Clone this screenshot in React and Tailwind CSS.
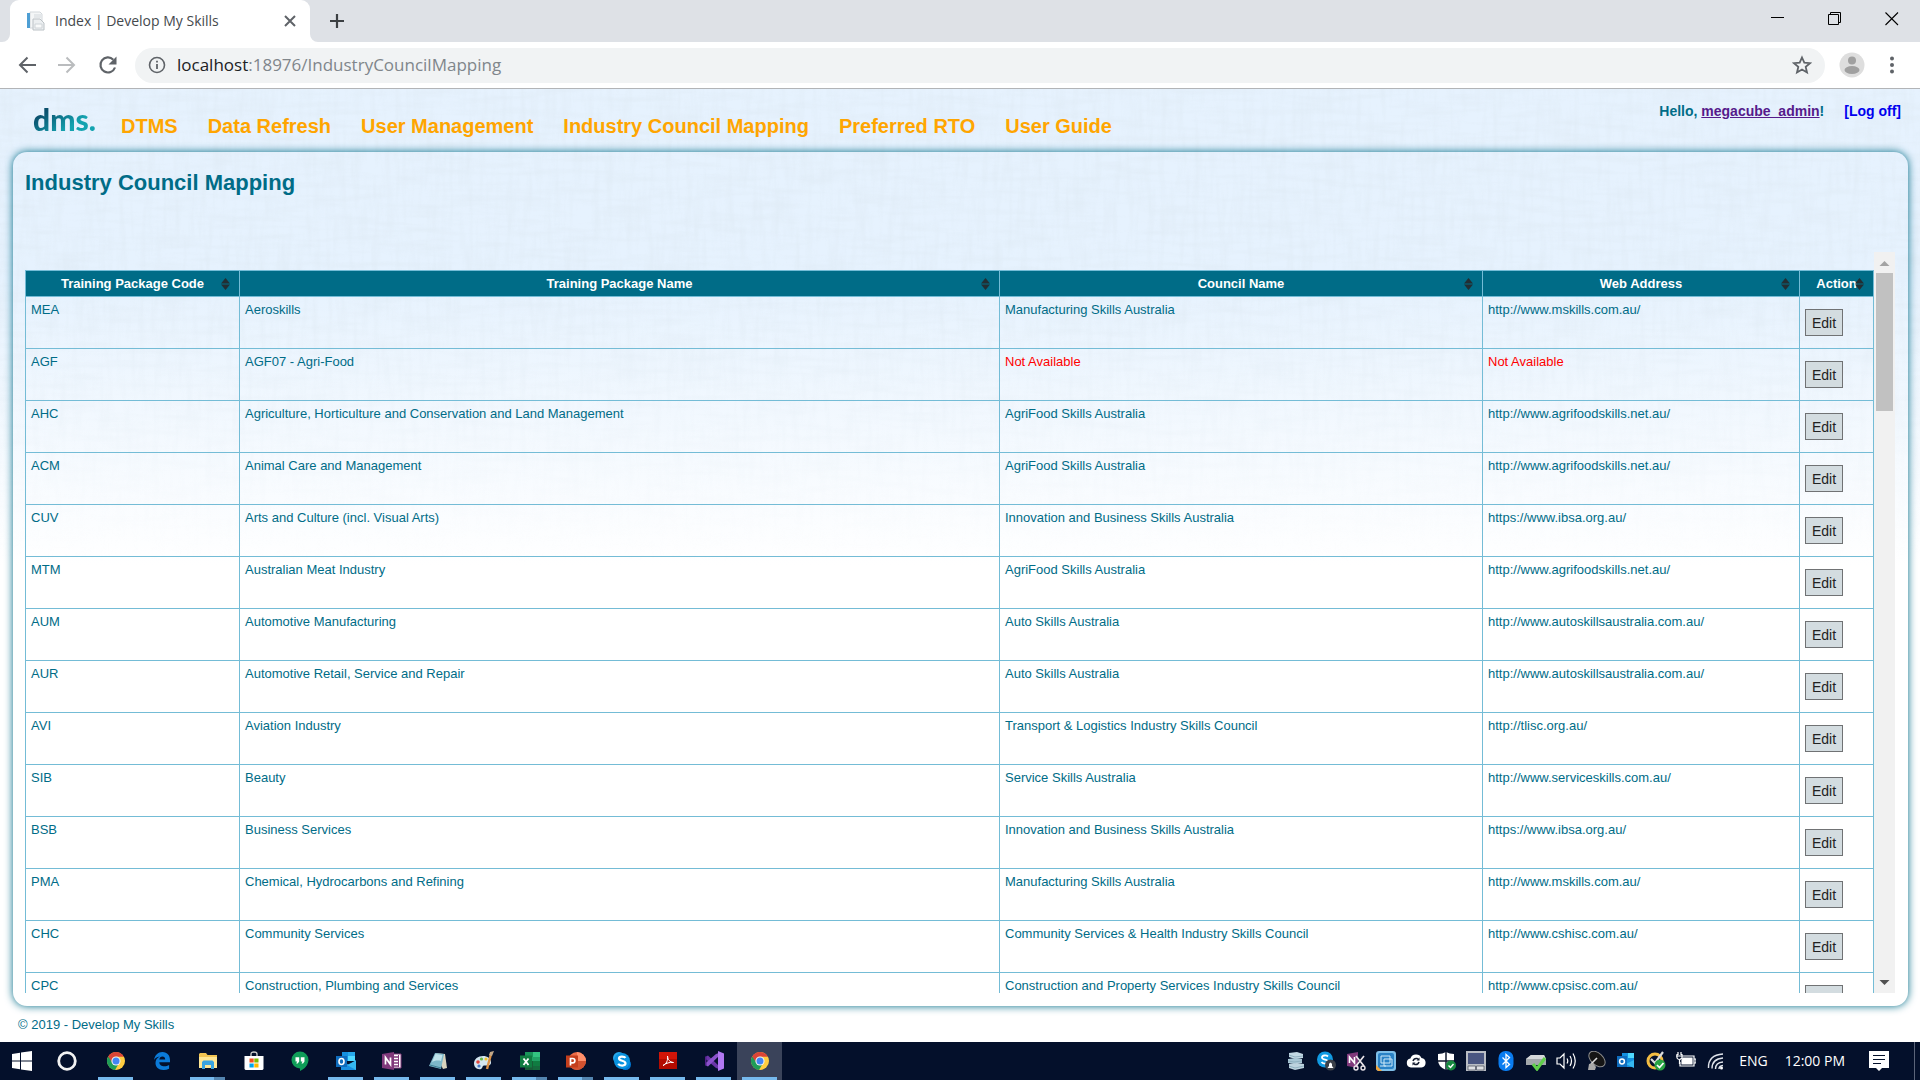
// src/App.jsx
import React from "react";

const navLinks = ["DTMS", "Data Refresh", "User Management", "Industry Council Mapping", "Preferred RTO", "User Guide"];

const columns = ["Training Package Code", "Training Package Name", "Council Name", "Web Address", "Action"];

const packages = [
    { code: "MEA", name: "Aeroskills", council: "Manufacturing Skills Australia", web: "http://www.mskills.com.au/" },
    { code: "AGF", name: "AGF07 - Agri-Food", council: null, web: null },
    { code: "AHC", name: "Agriculture, Horticulture and Conservation and Land Management", council: "AgriFood Skills Australia", web: "http://www.agrifoodskills.net.au/" },
    { code: "ACM", name: "Animal Care and Management", council: "AgriFood Skills Australia", web: "http://www.agrifoodskills.net.au/" },
    { code: "CUV", name: "Arts and Culture (incl. Visual Arts)", council: "Innovation and Business Skills Australia", web: "https://www.ibsa.org.au/" },
    { code: "MTM", name: "Australian Meat Industry", council: "AgriFood Skills Australia", web: "http://www.agrifoodskills.net.au/" },
    { code: "AUM", name: "Automotive Manufacturing", council: "Auto Skills Australia", web: "http://www.autoskillsaustralia.com.au/" },
    { code: "AUR", name: "Automotive Retail, Service and Repair", council: "Auto Skills Australia", web: "http://www.autoskillsaustralia.com.au/" },
    { code: "AVI", name: "Aviation Industry", council: "Transport & Logistics Industry Skills Council", web: "http://tlisc.org.au/" },
    { code: "SIB", name: "Beauty", council: "Service Skills Australia", web: "http://www.serviceskills.com.au/" },
    { code: "BSB", name: "Business Services", council: "Innovation and Business Skills Australia", web: "https://www.ibsa.org.au/" },
    { code: "PMA", name: "Chemical, Hydrocarbons and Refining", council: "Manufacturing Skills Australia", web: "http://www.mskills.com.au/" },
    { code: "CHC", name: "Community Services", council: "Community Services & Health Industry Skills Council", web: "http://www.cshisc.com.au/" },
    { code: "CPC", name: "Construction, Plumbing and Services", council: "Construction and Property Services Industry Skills Council", web: "http://www.cpsisc.com.au/" },
];

/* ---------- browser window ---------- */

const TabStrip = () => (
    <div className="flex h-[42px] items-stretch bg-[#dee1e6] pl-[2px]">
        <svg className="h-2 w-2 self-end" viewBox="0 0 8 8"><path d="M8 0v8H0a8 8 0 0 0 8-8z" fill="#fff" /></svg>
        <div className="flex w-[300px] items-center rounded-t-[9px] bg-white pl-[15px] pr-[10px]">
            <svg className="h-5 w-5" viewBox="0 0 20 20">
                <path d="M5 1h10l2 2v14H5z" fill="#f4f6f7" stroke="#d3d8dc" />
                <path d="M2 2h3v15H2z" fill="#4e9fd4" />
                <path d="M9 4h7M9 6h7" stroke="#d3d8dc" />
                <path d="M8 8h7l4 4v7H8z" fill="#eceff1" stroke="#bcc2c6" />
                <path d="M10 13h7v4h-7z" fill="#f9fafa" stroke="#cfd4d8" />
            </svg>
            <span className="ml-[10px] flex-1 whitespace-nowrap text-sm text-[#45494d]">Index | Develop My Skills</span>
            <button aria-label="Close tab" className="p-1">
                <svg className="h-3 w-3" viewBox="0 0 12 12" stroke="#5f6368" strokeWidth="2"><path d="M1 1l10 10M11 1L1 11" /></svg>
            </button>
        </div>
        <svg className="h-2 w-2 self-end" viewBox="0 0 8 8"><path d="M0 0v8h8a8 8 0 0 1-8-8z" fill="#fff" /></svg>
        <button aria-label="New tab" className="ml-[6px] px-[5px]">
            <svg className="h-4 w-4" viewBox="0 0 16 16" stroke="#3c4043" strokeWidth="2.2"><path d="M8 1v14M1 8h14" /></svg>
        </button>
        <div className="ml-auto flex items-start gap-[43px] pr-[21px] pt-3">
            <button aria-label="Minimize"><svg className="h-[14px] w-[14px]" viewBox="0 0 14 14"><path d="M0 5.5h13" stroke="#000" /></svg></button>
            <button aria-label="Restore">
                <svg className="h-[14px] w-[14px]" viewBox="0 0 14 14" fill="none" stroke="#000"><path d="M.5 2.5h10v10H.5zM2.5 2.5v-2h10v10h-2" /></svg>
            </button>
            <button aria-label="Close"><svg className="h-[14px] w-[14px]" viewBox="0 0 14 14"><path d="M.5.5L13 13M13 .5L.5 13" stroke="#000" strokeWidth="1.1" /></svg></button>
        </div>
    </div>
);

const Toolbar = () => (
    <div className="flex h-[47px] items-center border-b border-[#b2b4b7] bg-white pl-[17px] pr-[22px]">
        <button aria-label="Back">
            <svg className="h-5 w-5" viewBox="0 0 20 20" fill="none" stroke="#5f6368" strokeWidth="2"><path d="M19 10H3M10.5 2.5L3 10l7.5 7.5" /></svg>
        </button>
        <button aria-label="Forward" className="ml-5">
            <svg className="h-5 w-5" viewBox="0 0 20 20" fill="none" stroke="#babcbe" strokeWidth="2"><path d="M1 10h16M9.5 2.5L17 10l-7.5 7.5" /></svg>
        </button>
        <button aria-label="Reload" className="ml-[21px]">
            <svg className="h-5 w-5" viewBox="0 0 20 20"><path d="M17 12.5A7.5 7.5 0 1 1 15.3 4.7" fill="none" stroke="#5f6368" strokeWidth="2.2" /><path d="M18.5 1.5v8h-8z" fill="#5f6368" /></svg>
        </button>
        <div className="ml-[17px] flex h-[35px] flex-1 items-center rounded-full bg-[#f1f3f4] pl-[13px] pr-[13px]">
            <svg className="h-[18px] w-[18px]" viewBox="0 0 18 18"><circle cx="9" cy="9" r="7.5" fill="none" stroke="#5f6368" strokeWidth="1.6" /><path d="M9 8v5M9 4.8v1.8" stroke="#5f6368" strokeWidth="1.8" /></svg>
            <span className="ml-[11px] flex-1 text-[17px] text-[#80868b]"><span className="text-[#202124]">localhost</span>:18976/IndustryCouncilMapping</span>
            <button aria-label="Bookmark">
                <svg className="h-5 w-5" viewBox="0 0 20 20" fill="none" stroke="#5f6368" strokeWidth="1.8"><path d="M10 2.5l2.3 5.2 5.7.5-4.3 3.7 1.3 5.6-5-3-5 3 1.3-5.6L2 8.2l5.7-.5z" /></svg>
            </button>
        </div>
        <button aria-label="Profile" className="ml-[14px]">
            <svg className="h-[26px] w-[26px]" viewBox="0 0 26 26"><circle cx="13" cy="13" r="12.5" fill="#dedede" /><circle cx="13" cy="8.5" r="4" fill="#a0a0a0" /><ellipse cx="13" cy="18" rx="7.5" ry="4" fill="#a0a0a0" /></svg>
        </button>
        <button aria-label="Menu" className="ml-[21px]">
            <svg className="h-5 w-[12px]" viewBox="0 0 12 20" fill="#5f6368"><circle cx="6" cy="3.5" r="2" /><circle cx="6" cy="10" r="2" /><circle cx="6" cy="16.5" r="2" /></svg>
        </button>
    </div>
);

/* ---------- page ---------- */

// woven cloth texture that fades out towards the middle of the page
const Linen = () => (
    <svg className="absolute inset-0 -z-10 h-full w-full" aria-hidden="true">
        <defs>
            <filter id="weft" x="0" y="0" width="100%" height="100%">
                <feTurbulence type="fractalNoise" baseFrequency="0.02 0.15" numOctaves="3" seed="3" />
                <feColorMatrix values="0 0 0 0 0.68  0 0 0 0 0.76  0 0 0 0 0.82  1.2 0 0 0 -0.5" />
            </filter>
            <filter id="warp" x="0" y="0" width="100%" height="100%">
                <feTurbulence type="fractalNoise" baseFrequency="0.15 0.02" numOctaves="3" seed="8" />
                <feColorMatrix values="0 0 0 0 0.68  0 0 0 0 0.76  0 0 0 0 0.82  1.2 0 0 0 -0.5" />
            </filter>
            <linearGradient id="fade" x1="0" y1="0" x2="0" y2="1">
                <stop offset="0" stopColor="#fff" />
                <stop offset=".2" stopColor="#fff" />
                <stop offset=".5" stopColor="#000" />
            </linearGradient>
            <mask id="fadeMask"><rect width="100%" height="100%" fill="url(#fade)" /></mask>
        </defs>
        <g mask="url(#fadeMask)" opacity=".45">
            <rect width="100%" height="100%" filter="url(#weft)" />
            <rect width="100%" height="100%" filter="url(#warp)" />
        </g>
    </svg>
);

const SiteHeader = () => (
    <header className="flex h-[63px] shrink-0 items-start pl-[33px] pr-[19px]">
        <a href="#" className="mt-[10px] w-[62px] bg-gradient-to-br from-[#0a4f6c] from-25% to-[#14a3b0] to-65% bg-clip-text font-['Lato',sans-serif] text-[30px] leading-10 font-black text-transparent">dms.</a>
        <nav className="mt-[25px] ml-[26px] flex gap-[30px] text-xl leading-6 font-bold whitespace-nowrap text-[#ffa500]">
            {navLinks.map(l => <a key={l} href="#">{l}</a>)}
        </nav>
        <div className="mt-3 ml-auto flex gap-5 text-sm font-bold whitespace-nowrap text-[#006c87]">
            <span>Hello, <a href="#" className="text-[#551a8b] underline">megacube_admin</a>!</span>
            <a href="#" className="text-[#0000ee]">[Log off]</a>
        </div>
    </header>
);

const SortIcon = () => (
    <svg className="absolute top-[7px] right-[9px] h-3 w-[9px]" viewBox="0 0 9 12" fill="#222e33"><path d="M4.5 0L9 5.4H0zM0 6.6h9L4.5 12z" /></svg>
);

const MappingTable = () => (
    <table className="w-full table-fixed border-collapse border border-[#74bcd6] text-[13px] leading-[18px]">
        <colgroup>
            <col className="w-[214px]" />
            <col />
            <col className="w-[483px]" />
            <col className="w-[317px]" />
            <col className="w-[74px]" />
        </colgroup>
        <thead>
            <tr className="h-[26px] bg-[#006c87] text-white">
                {columns.map(c => (
                    <th key={c} className="relative border border-[#74bcd6] p-0">{c}<SortIcon /></th>
                ))}
            </tr>
        </thead>
        <tbody>
            {packages.map(p => (
                <tr key={p.code} className="h-[52px]">
                    <td className="border border-[#74bcd6] px-[5px] py-1 align-top">{p.code}</td>
                    <td className="border border-[#74bcd6] px-[5px] py-1 align-top">{p.name}</td>
                    <td className="border border-[#74bcd6] px-[5px] py-1 align-top">{p.council || <span className="text-[#ff0000]">Not Available</span>}</td>
                    <td className="border border-[#74bcd6] px-[5px] py-1 align-top">{p.web || <span className="text-[#ff0000]">Not Available</span>}</td>
                    <td className="border border-[#74bcd6] px-[5px] py-0 align-middle">
                        <button className="block h-[27px] w-[38px] border border-[#707274] bg-[#d3dce0] text-sm text-[#222]">Edit</button>
                    </td>
                </tr>
            ))}
        </tbody>
    </table>
);

const Scrollbar = () => (
    <div className="flex w-[21px] shrink-0 flex-col items-center bg-[#f1f1f1]">
        <svg className="h-[21px] w-[21px] shrink-0" viewBox="0 0 21 21"><path d="M5.5 14L10.5 9l5 5z" fill="#a3a3a3" /></svg>
        <div className="h-[138px] w-[17px] shrink-0 bg-[#c1c1c1]" />
        <svg className="mt-auto h-[21px] w-[21px] shrink-0" viewBox="0 0 21 21"><path d="M5.5 8L10.5 13l5-5z" fill="#505050" /></svg>
    </div>
);

/* ---------- taskbar ---------- */

const ChromeIcon = () => (
    <svg className="h-5 w-5" viewBox="0 0 20 20">
        <circle cx="10" cy="10" r="9" fill="#ffcd40" />
        <path d="M10 10L2.2 5.5A9 9 0 0 0 9 19l3.5-6z" fill="#1e9d58" />
        <path d="M2.2 5.5A9 9 0 0 1 17.9 5.7H10a4.3 4.3 0 0 0-4 5.6z" fill="#db4437" />
        <circle cx="10" cy="10" r="4.6" fill="#f1f1f1" />
        <circle cx="10" cy="10" r="3.5" fill="#4285f4" />
    </svg>
);

const EdgeIcon = () => (
    <svg className="h-5 w-5" viewBox="0 0 20 20"><path d="M2 9C2.8 4 6 1 10.4 1 15.5 1 18 4.8 18 9v2.3H7.3c.2 3 2.6 4 5 4 1.8 0 3.4-.5 4.8-1.3v3.7A12 12 0 0 1 11.3 19C6.5 19 3.5 16 3.5 12c0-3 1.5-5.2 4.2-6.5C4.8 5.8 3 7.3 2 9zm5.3-.5h5.9c0-1.9-1-3-2.8-3-1.7 0-2.8 1.2-3.1 3z" fill="#0b7ad8" /></svg>
);

const ExplorerIcon = () => (
    <svg className="h-5 w-5" viewBox="0 0 20 20"><path d="M1 3l1-1h6l1.5 2H19v13H1z" fill="#f2c453" /><path d="M1 6h18v11H1z" fill="#ffe694" /><path d="M4 18v-7l1.5-1.5h9L16 11v7h-3v-4H7v4z" fill="#3aa4e0" /></svg>
);

const StoreIcon = () => (
    <svg className="h-5 w-5" viewBox="0 0 20 20"><path d="M7 6V3q0-2 3-2t3 2v3" fill="none" stroke="#cfcfcf" strokeWidth="1.3" /><path d="M.5 5h19v13l-1 1h-17l-1-1z" fill="#fff" /><path d="M5.5 7.5h4.2v4H5.500z" fill="#f25022" /><path d="M10.3 7.5h4.2v4h-4.2z" fill="#7fba00" /><path d="M5.5 12.5h4.2v4H5.500z" fill="#00a4ef" /><path d="M10.3 12.5h4.2v4h-4.2z" fill="#ffb900" /></svg>
);

const HangoutsIcon = () => (
    <svg className="h-5 w-5" viewBox="0 0 20 20"><circle cx="10" cy="9" r="8.5" fill="#0f9d58" /><path d="M10 15v5c4-2 6-4 7.5-7z" fill="#0f9d58" /><path d="M5.5 6.3h3.7v4.2l-1.5 2H6.2l1-2H5.5zM10.8 6.3h3.7v4.2l-1.5 2h-1.5l1-2h-1.7z" fill="#fff" /></svg>
);

const OutlookIcon = () => (
    <svg className="h-5 w-5" viewBox="0 0 20 20"><path d="M6 1h13v9H6z" fill="#1490df" /><path d="M12 1h7v4h-7z" fill="#28a8ea" /><path d="M12 5h7v5h-7z" fill="#50d9ff" /><path d="M5 9l8 5 7-5v10H5z" fill="#1a8fe0" /><path d="M20 9.5V19l-9-5z" fill="#35b8f1" /><path d="M0 5h11v11H0z" fill="#0f6cbd" /><ellipse cx="5.5" cy="10.5" rx="2.5" ry="3" fill="none" stroke="#fff" strokeWidth="1.6" /></svg>
);

const OneNoteIcon = () => (
    <svg className="h-5 w-5" viewBox="0 0 20 20"><path d="M11 3h8v14h-8z" fill="#fff" stroke="#80397b" /><path d="M12 6h4M12 9h4M12 12h4M12 15h4" stroke="#80397b" strokeWidth="1.3" /><path d="M16.5 4v12" stroke="#80397b" /><path d="M0 3l12-2v18L0 17z" fill="#80397b" /><path d="M3.5 13.5v-7l5 7v-7" fill="none" stroke="#fff" strokeWidth="1.7" /></svg>
);

const NotepadIcon = () => (
    <svg className="h-5 w-5" viewBox="0 0 20 20"><path d="M7 2l10 1 2 14-4 1z" fill="#d9d3bd" /><path d="M7 2l9 1-3 15L1 15z" fill="#7db7c9" /><path d="M7.5 3l7 1-1.5 6C9 9 6 10 4 11z" fill="#bfe2ea" /><path d="M2 14l11 3" stroke="#3d7f96" /></svg>
);

const PaintIcon = () => (
    <svg className="h-5 w-5" viewBox="0 0 20 20"><path d="M9 5C4 5 0 8 0 12.5 0 16 3 19 7 18c2-1 1-3 3-3.5 3-.5 7 1 7-3C17 7.5 13.5 5 9 5z" fill="#d5e6f0" /><circle cx="4" cy="11" r="1.8" fill="#e2463f" /><circle cx="7.5" cy="8" r="1.6" fill="#69b545" /><circle cx="12" cy="8" r="1.6" fill="#f2c230" /><circle cx="5" cy="15" r="1.6" fill="#4478c9" /><path d="M17 3l-4 15" stroke="#dc9046" strokeWidth="2.4" /><path d="M15 4l1-3 4-1-2 5z" fill="#c3a889" /></svg>
);

const ExcelIcon = () => (
    <svg className="h-5 w-5" viewBox="0 0 20 20"><path d="M5 1h15v18H5z" fill="#21a366" /><path d="M5 1h8v5H5z" fill="#19935a" /><path d="M13 1h7v5h-7z" fill="#33c481" /><path d="M5 10h8v9H5z" fill="#185c37" /><path d="M13 10h7v5h-7z" fill="#107c41" /><path d="M13 15h7v4h-7z" fill="#15693d" /><path d="M0 4.5h12v12H0z" fill="#107c41" /><path d="M3.5 7.5l5 6.5M8.5 7.5L3.5 14" stroke="#fff" strokeWidth="1.8" /></svg>
);

const PowerPointIcon = () => (
    <svg className="h-5 w-5" viewBox="0 0 20 20"><circle cx="11" cy="10" r="9" fill="#ed6c47" /><path d="M11 1a9 9 0 0 1 9 9h-9z" fill="#ff8f6b" /><path d="M2 10h18a9 9 0 0 1-18 0z" fill="#d35230" /><path d="M0 4.5h12v12H0z" fill="#c43e1c" /><path d="M4.5 14.5v-7h2.2a2 2 0 0 1 0 4.3H4.5" fill="none" stroke="#fff" strokeWidth="1.7" /></svg>
);

const SkypeIcon = () => (
    <svg className="h-5 w-5" viewBox="0 0 20 20"><circle cx="7" cy="7" r="6" fill="#28a8ea" /><circle cx="13.5" cy="13.5" r="5.5" fill="#0078d4" /><circle cx="10" cy="10" r="8" fill="#0a93e0" /><path d="M13.5 6.8C12.5 5.3 7 4.7 7 7.5c0 3 6.5 1.6 6.5 4.8 0 3-6 2.8-7.3.5" fill="none" stroke="#fff" strokeWidth="2.2" /></svg>
);

const AcrobatIcon = () => (
    <svg className="h-5 w-5" viewBox="0 0 20 20"><path d="M1 1h18v17H1z" fill="#b30b00" /><path d="M1 1h18v7H1z" fill="#d11508" /><path d="M5 14.5c3.500-1.500 5-5 4.500-9.500.3 3.500 2 6 6 6.500-4-.5-7 .5-10.500 3z" fill="none" stroke="#fff" /></svg>
);

const VisualStudioIcon = () => (
    <svg className="h-5 w-5" viewBox="0 0 20 20"><path d="M1 6l3-1.500L15 15v3L12 17 1 7.500z" fill="#6a35a8" /><path d="M1 14l3 1.500L15 5V2l-3 1L1 12.500z" fill="#8b52cc" /><path d="M1 6l1.500-1v10L1 14z" fill="#52218a" /><path d="M14 0l6 2.500v15L14 20z" fill="#b077f2" /></svg>
);

const taskApps = [
    { name: "Google Chrome", icon: ChromeIcon, open: true },
    { name: "Microsoft Edge", icon: EdgeIcon },
    { name: "File Explorer", icon: ExplorerIcon, open: true, stacked: true },
    { name: "Microsoft Store", icon: StoreIcon },
    { name: "Hangouts", icon: HangoutsIcon },
    { name: "Outlook", icon: OutlookIcon, open: true },
    { name: "OneNote", icon: OneNoteIcon, open: true },
    { name: "Notepad", icon: NotepadIcon, open: true },
    { name: "Paint", icon: PaintIcon, open: true },
    { name: "Excel", icon: ExcelIcon, open: true, stacked: true },
    { name: "PowerPoint", icon: PowerPointIcon, open: true, stacked: true },
    { name: "Skype", icon: SkypeIcon, open: true },
    { name: "Acrobat Reader", icon: AcrobatIcon, open: true },
    { name: "Visual Studio", icon: VisualStudioIcon, open: true },
    { name: "Chrome window", icon: ChromeIcon, open: true, active: true },
];

const trayIcons = [
    <g key="server"><path d="M3 2l8-1 6 2v4l-8 1-6-2z" fill="#c3d8e4" /><path d="M2 8l8-1 6 1v4l-8 1-6-1z" fill="#a9c7d6" /><path d="M3 13l8-1 7 1v4l-9 2-6-2z" fill="#bdd3df" /><path d="M3 4l6 2 8-1M2 10l6 1 8-1M3 15l6 2 9-2" stroke="#8fb0c0" fill="none" /></g>,
    <g key="skype"><circle cx="9" cy="8.5" r="8" fill="#119ae2" /><path d="M12 5.5C10.5 4 6 4 6 6.5c0 2.8 6 1.5 6 4.2 0 2.500-5 2.300-6.500.3" fill="none" stroke="#fff" strokeWidth="1.8" /><circle cx="14.5" cy="14" r="5.5" fill="#3b4048" /><path d="M11.5 17l1.500-2v-2q1.500-3 3 0v2l1.500 2z" fill="#fff" /></g>,
    <g key="clipper"><path d="M1 3l11-2v16L1 15z" fill="#80397b" /><path d="M3.5 12V6l5 6V6" fill="none" stroke="#fff" strokeWidth="1.6" /><path d="M10 5l8 10M18 5l-8 10" stroke="#e9e4e9" strokeWidth="1.7" /><circle cx="10" cy="17" r="2" fill="none" stroke="#e9e4e9" strokeWidth="1.4" /><circle cx="17" cy="17" r="2" fill="none" stroke="#e9e4e9" strokeWidth="1.4" /></g>,
    <g key="graphics"><rect width="20" height="20" rx="3" fill="#7fbfe8" /><rect x="2" y="2" width="16" height="16" rx="2" fill="#2a82c6" /><path d="M5 5h9v7H5zM8 8h8v7H8zM4 15h6" fill="none" stroke="#cde8f8" /><path d="M0 14l6 6H2l-2-2z" fill="#f0a43a" /></g>,
    <g key="cloud"><path d="M5 16.5a4.500 4.500 0 0 1-.6-8.900A6 6 0 0 1 15.500 7a4.800 4.800 0 0 1 0 9.500z" fill="#fff" /><path d="M7 10q1-3 4-2.500l1.500 1M13 11q-1 3-4 2.500l-1.500-1" fill="none" stroke="#10182c" strokeWidth="1.5" /><path d="M13.500 6.500v3h-3zM6.500 14.500v-3h3z" fill="#10182c" /></g>,
    <g key="defender"><path d="M10 1q3.500 2 8 2v6q0 7-8 10-8-3-8-10V3q4.500 0 8-2z" fill="#fff" /><path d="M10 1v18M2 10h16" stroke="#10182c" strokeWidth="1.5" /><circle cx="15" cy="14.5" r="5" fill="#16893f" /><path d="M12.500 14.500l2 2 3-3.500" fill="none" stroke="#fff" strokeWidth="1.4" /></g>,
    <g key="touchpad"><path d="M0 0h20v20H0z" fill="#b9bdc4" /><path d="M2 2h16v11H2z" fill="#4a5681" /><path d="M2 15h7.500v4H2zM10.500 15H18v4h-7.500z" fill="#dfe1e4" stroke="#555b68" strokeWidth=".8" /></g>,
    <g key="bluetooth"><rect x="2.5" width="15" height="20" rx="7" fill="#0a7cf0" /><path d="M6.500 6.500l7 7L10 16.500v-13l3.500 3-7 7" fill="none" stroke="#fff" strokeWidth="1.3" /></g>,
    <g key="usb"><path d="M0 8l5-4h13l2 4v6H0z" fill="#a2a7aa" /><path d="M0 8h20L18 4H5z" fill="#d4d7d9" /><path d="M7 13l4 5 8-11" fill="none" stroke="#5fcf4a" strokeWidth="3.2" /></g>,
    <g key="volume" fill="none" stroke="#fff" strokeWidth="1.2"><path d="M1 7h3l4-4v14l-4-4H1zM11 7.500q1.500 2.500 0 5M14 5q3 5 0 10M17 2.500q4.500 7.500 0 15" /></g>,
    <g key="dish"><ellipse cx="11" cy="8" rx="9.5" ry="6" transform="rotate(42 11 8)" fill="#151515" stroke="#8d8d8d" /><path d="M5 13l6-6" stroke="#ddd" strokeWidth="1.6" /><path d="M2 19l1-6 4-1 3 4-1 3z" fill="#aaa" /></g>,
    <g key="outlook"><path d="M6 2h12v14H6z" fill="#1490df" /><path d="M12 2h6v5h-6z" fill="#50d9ff" /><path d="M18 9v8l-8-4z" fill="#35b8f1" /><path d="M1 5h10v11H1z" fill="#0f6cbd" /><circle cx="6" cy="10.5" r="2.4" fill="none" stroke="#fff" strokeWidth="1.5" /></g>,
    <g key="security"><circle cx="9" cy="10" r="7" fill="none" stroke="#f3bd42" strokeWidth="3" /><path d="M5 8l4 4L17 1" fill="none" stroke="#ddd" strokeWidth="2.2" /><circle cx="14" cy="14" r="5.5" fill="#27a343" /><path d="M11 14l2.500 2.500 4-4.500" fill="none" stroke="#fff" strokeWidth="1.7" /></g>,
    <g key="battery" fill="none" stroke="#fff" strokeWidth="1.2"><path d="M6 5h12v10H4v-4M18.500 8H20v4h-1.500M1 3v4q2 3 5 0V3M0 5h6M2 1v3M5 1v3M3.500 9v4" /><path d="M7 7h9v6H6V9z" fill="#fff" /></g>,
    <g key="wifi" fill="none" stroke="#dfe3ea" strokeWidth="1.4"><path d="M2.500 17Q2 4 17 3M6 17.500Q6 8 17 7M9.500 18q0-6.500 7.500-7M13 18q0-3 4-3.500" /><circle cx="15.5" cy="17" r="1.5" fill="#fff" stroke="none" /></g>,
];

const Taskbar = () => (
    <footer className="flex h-[38px] shrink-0 items-stretch bg-[#04102b] font-['Open_Sans',sans-serif] text-white">
        <button aria-label="Start" className="flex w-11 items-center justify-center">
            <svg className="h-5 w-5" viewBox="0 0 20 20" fill="#fff"><path d="M0 3l8-1.200v7.700H0zM9 1.600L20 0v9.500H9zM0 10.500h8v7.700L0 17zM9 10.500h11V20L9 18.400z" /></svg>
        </button>
        <button aria-label="Search" className="flex w-[46px] items-center justify-center">
            <svg className="h-5 w-5" viewBox="0 0 20 20"><circle cx="10" cy="10" r="8.3" fill="none" stroke="#f2f2f2" strokeWidth="2.8" /></svg>
        </button>
        <div className="flex gap-px pl-[3px]">
            {taskApps.map(({ name, icon: Icon, open, stacked, active }) => (
                <button key={name} aria-label={name} className={`flex w-[45px] flex-col items-center pt-[9px] ${active ? "bg-[#3a435a]" : ""}`}>
                    <Icon />
                    {open && (
                        <span className="mt-auto flex h-[3px] w-[35px]">
                            <span className="flex-1 bg-[#76b9ed]" />
                            {stacked && <span className="w-[11px] bg-[#5485b0]" />}
                        </span>
                    )}
                </button>
            ))}
        </div>
        <div className="ml-auto flex items-center gap-[10px]">
            {trayIcons.map(icon => <svg key={icon.key} className="h-5 w-5" viewBox="0 0 20 20">{icon}</svg>)}
        </div>
        <span className="ml-[13px] self-center text-sm">ENG</span>
        <span className="ml-[17px] self-center text-sm whitespace-nowrap">12:00 PM</span>
        <button aria-label="Notifications" className="ml-6">
            <svg className="h-5 w-5" viewBox="0 0 20 20"><path d="M0 0h20v17h-7l-3 3-3-3H0z" fill="#fff" /><path d="M4 4.500h12M4 8.500h12M4 12.500h8" stroke="#04102b" strokeWidth="1.2" /></svg>
        </button>
        <div className="ml-[25px] w-[6px] border-l border-[#5b6479]" />
    </footer>
);

export default function App() {
    return (
        <div className="flex h-screen flex-col overflow-hidden bg-white">
            <div className="shrink-0 font-['Open_Sans',sans-serif]">
                <TabStrip />
                <Toolbar />
            </div>
            <div className="relative isolate flex min-h-0 flex-1 flex-col bg-gradient-to-b from-[#e6f2fe] from-20% to-white to-50% font-['Liberation_Sans',sans-serif] text-[#006c87]">
                <Linen />
                <SiteHeader />
                <main className="mr-3 ml-[13px] flex min-h-0 flex-1 flex-col rounded-[14px] pr-[13px] pb-[13px] pl-3 shadow-[0_0_8px_#006c87]">
                    <h1 className="h-[100px] shrink-0 pt-[19px] text-[22px] leading-6 font-bold">Industry Council Mapping</h1>
                    <div className="flex min-h-0 flex-1">
                        <div className="min-w-0 flex-1 overflow-hidden pt-[18px]">
                            <MappingTable />
                        </div>
                        <Scrollbar />
                    </div>
                </main>
                <p className="h-9 shrink-0 pt-[10px] pl-[18px] text-[13px] leading-[18px]">© 2019 - Develop My Skills</p>
            </div>
            <Taskbar />
        </div>
    );
}
